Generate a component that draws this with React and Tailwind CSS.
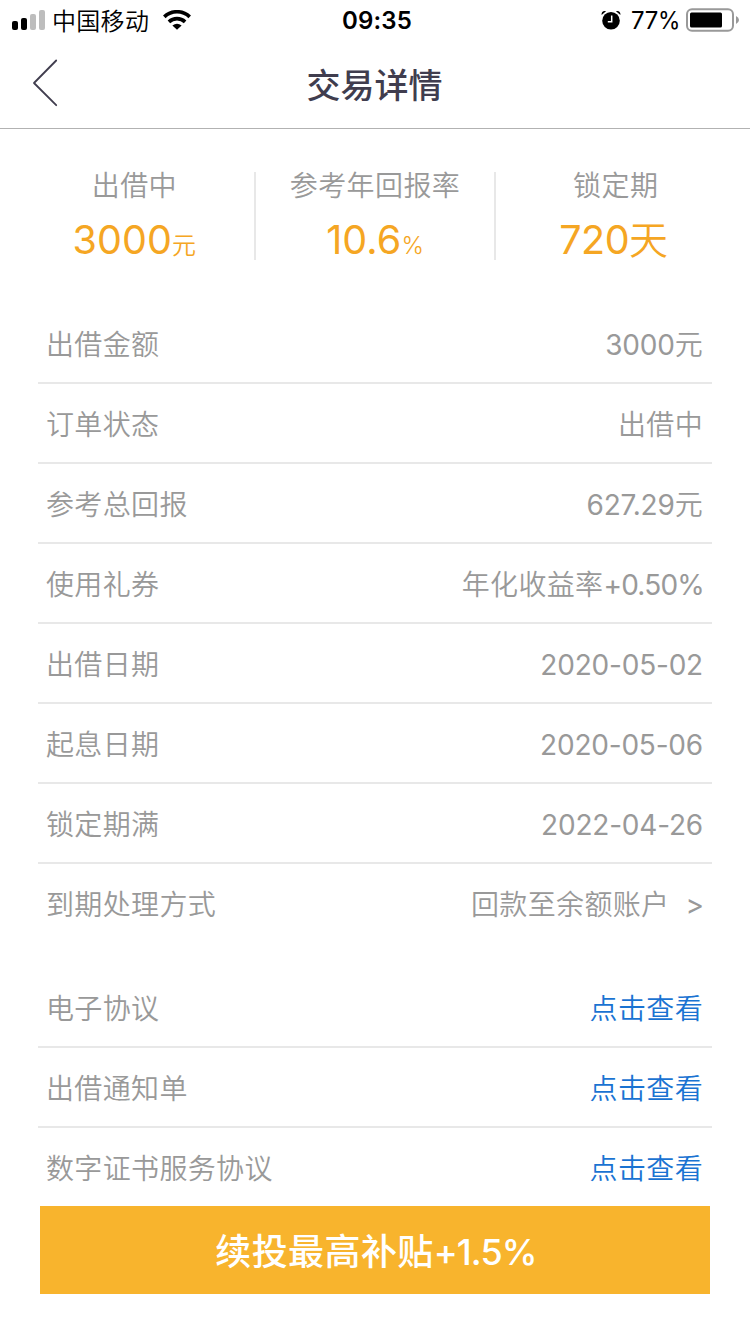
import React from "react";

const details = [
  ["出借金额", "3000", "元"],
  ["订单状态", "", "出借中"],
  ["参考总回报", "627.29", "元"],
  ["使用礼券", "年化收益率", "+0.50%"],
  ["出借日期", "2020-05-02", ""],
  ["起息日期", "2020-05-06", ""],
  ["锁定期满", "2022-04-26", ""],
  ["到期处理方式", "", "回款至余额账户", true],
];

const documents = ["电子协议", "出借通知单", "数字证书服务协议"];

function styleFor(text) {
  if (text.includes("%")) return "-mr-px font-[380] tracking-[-0.8px]";
  return /[0-9]/.test(text) ? "font-[380] tracking-[-0.2px]" : "tracking-[0.35px]";
}

function StatusBar() {
  return (
    <div className="grid h-10 grid-cols-3 items-center text-black">
      <div className="flex h-10 items-center pl-3">
        <svg width="34" height="20" viewBox="0 0 34 20">
          <rect x="0" y="11" width="6" height="9" rx="2" />
          <rect x="9" y="8" width="6" height="12" rx="2" />
          <rect x="18" y="4" width="6" height="16" rx="2" fill="#bdbdbd" />
          <rect x="27" y="0" width="6" height="20" rx="2" fill="#bdbdbd" />
        </svg>
        <span className="ml-[6px] pt-[3px] text-[24px] font-[350] leading-[37px] tracking-[0.3px]">中国移动</span>
        <svg className="ml-[14px]" width="28" height="20" viewBox="0 0 28 20">
          <g fill="none" stroke="#000" strokeWidth="3.7">
            <path d="M1.3 6.8 A18.5 18.5 0 0 1 26.7 6.8" />
            <path d="M5.9 11.8 A12 12 0 0 1 22.1 11.8" />
          </g>
          <path d="M9.4 15.6 Q14 12 18.6 15.6 L14 19.8 Z" />
        </svg>
      </div>
      <div className="pl-1 pt-px text-center text-[24px] font-semibold leading-[39px] tracking-[0.2px]">09:35</div>
      <div className="flex h-10 items-center justify-end pr-[11px]">
        <svg width="20" height="20" viewBox="0 0 20 20">
          <circle cx="10" cy="10.8" r="8.8" />
          <path d="M0.6 5 C0.2 2 2.4 .6 5 1.3 Z M19.4 5 C19.8 2 17.6 .6 15 1.3 Z" />
          <path d="M10.7 5.5 V11.7 H6.8" fill="none" stroke="#fff" strokeWidth="1.5" />
        </svg>
        <span className="ml-[10px] pt-px text-[24px] leading-[39px] tracking-[-0.4px]">
          77<span className="inline-block origin-left scale-x-[0.95]">%</span>
        </span>
        <svg className="ml-[5px]" width="53" height="24" viewBox="0 0 53 24">
          <rect x="1" y="1.2" width="46" height="21.5" rx="5" fill="none" stroke="#999" strokeWidth="2" />
          <rect x="4" y="4.5" width="32" height="15" rx="1.5" />
          <path d="M50 8 Q53 9.5 53 12 Q53 14.5 50 16 Z" fill="#999" />
        </svg>
      </div>
    </div>
  );
}

function Stat({ label, value, tail, unit }) {
  return (
    <div className="flex flex-1 flex-col items-center">
      <div className="h-[28px] pt-px text-[28px] font-[350] leading-[27px] tracking-[0.4px] text-[#999]">{label}</div>
      <div className="mt-[20px] flex h-[40px] items-baseline whitespace-nowrap text-[39.5px] leading-[40px] text-[#f5a623]">
        <span className={tail ? "tracking-[-0.5px]" : "tracking-[0.1px]"}>{value}</span>
        {tail && <span className="mr-1 font-[350] text-[39px]">{tail}</span>}
        {unit && <span className="font-[350] text-[24px]">{unit}</span>}
      </div>
    </div>
  );
}

function Row({ label, last, children }) {
  const border = last ? "border-transparent" : "border-[#e8e8e8]";
  return (
    <div className={`flex h-20 items-center justify-between border-b-2 pl-2 pr-[9px] pt-1 ${border}`}>
      <span className="tracking-[0.35px]">{label}</span>
      {children}
    </div>
  );
}

export default function App() {
  return (
    <div className="flex h-[1334px] w-[750px] flex-col overflow-hidden bg-white font-['Inter','Noto_Sans_CJK_SC',sans-serif]">
      <StatusBar />
      <header className="grid h-[89px] grid-cols-[80px_1fr_80px] items-center border-b border-[#b2b2b2] text-[#403d4e]">
        <svg className="-mt-[2px] ml-8" width="26" height="48" viewBox="0 0 26 48" fill="none" stroke="currentColor" strokeWidth="1.8">
          <path d="M24.2 1.5 L2 24 L24.2 46.2" strokeLinecap="round" strokeLinejoin="round" />
        </svg>
        <h1 className="pr-px pt-[3px] text-center text-[34px] font-medium leading-[48px]">交易详情</h1>
      </header>

      <section className="mt-[43px] flex h-[88px] px-[15px]">
        <Stat label="出借中" value="3000" unit="元" />
        <div className="w-[2px] bg-[#e8e8e8]" />
        <Stat label="参考年回报率" value="10.6" unit="%" />
        <div className="w-[2px] bg-[#e8e8e8]" />
        <Stat label="锁定期" value="720" tail="天" />
      </section>

      <main className="mx-[38px] mt-[44px] text-[28px] font-[350] leading-[40px] text-[#999]">
        <div>
          {details.map(([label, first, second, arrow], i) => (
            <Row key={label} label={label} last={i === details.length - 1}>
              <span className="flex">
                <span className={styleFor(first)}>{first}</span>
                <span className={styleFor(second)}>{second}</span>
                {arrow && <span className="-mr-px ml-4 font-[380]">&gt;</span>}
              </span>
            </Row>
          ))}
        </div>
        <div className="mt-6 h-[238px] overflow-hidden">
          {documents.map((label, i) => (
            <Row key={label} label={label} last={i === documents.length - 1}>
              <a className="tracking-[0.35px] text-[#1a73d2]">点击查看</a>
            </Row>
          ))}
        </div>
      </main>

      <button className="mx-10 flex h-[88px] shrink-0 items-center justify-center bg-[#f8b42d] pl-[2px] pt-[3px] text-[36px] font-medium text-white">
        <span className="tracking-[0.4px]">续投最高补贴</span>
        <span className="tracking-[-0.9px]">+1.5%</span>
      </button>
    </div>
  );
}
